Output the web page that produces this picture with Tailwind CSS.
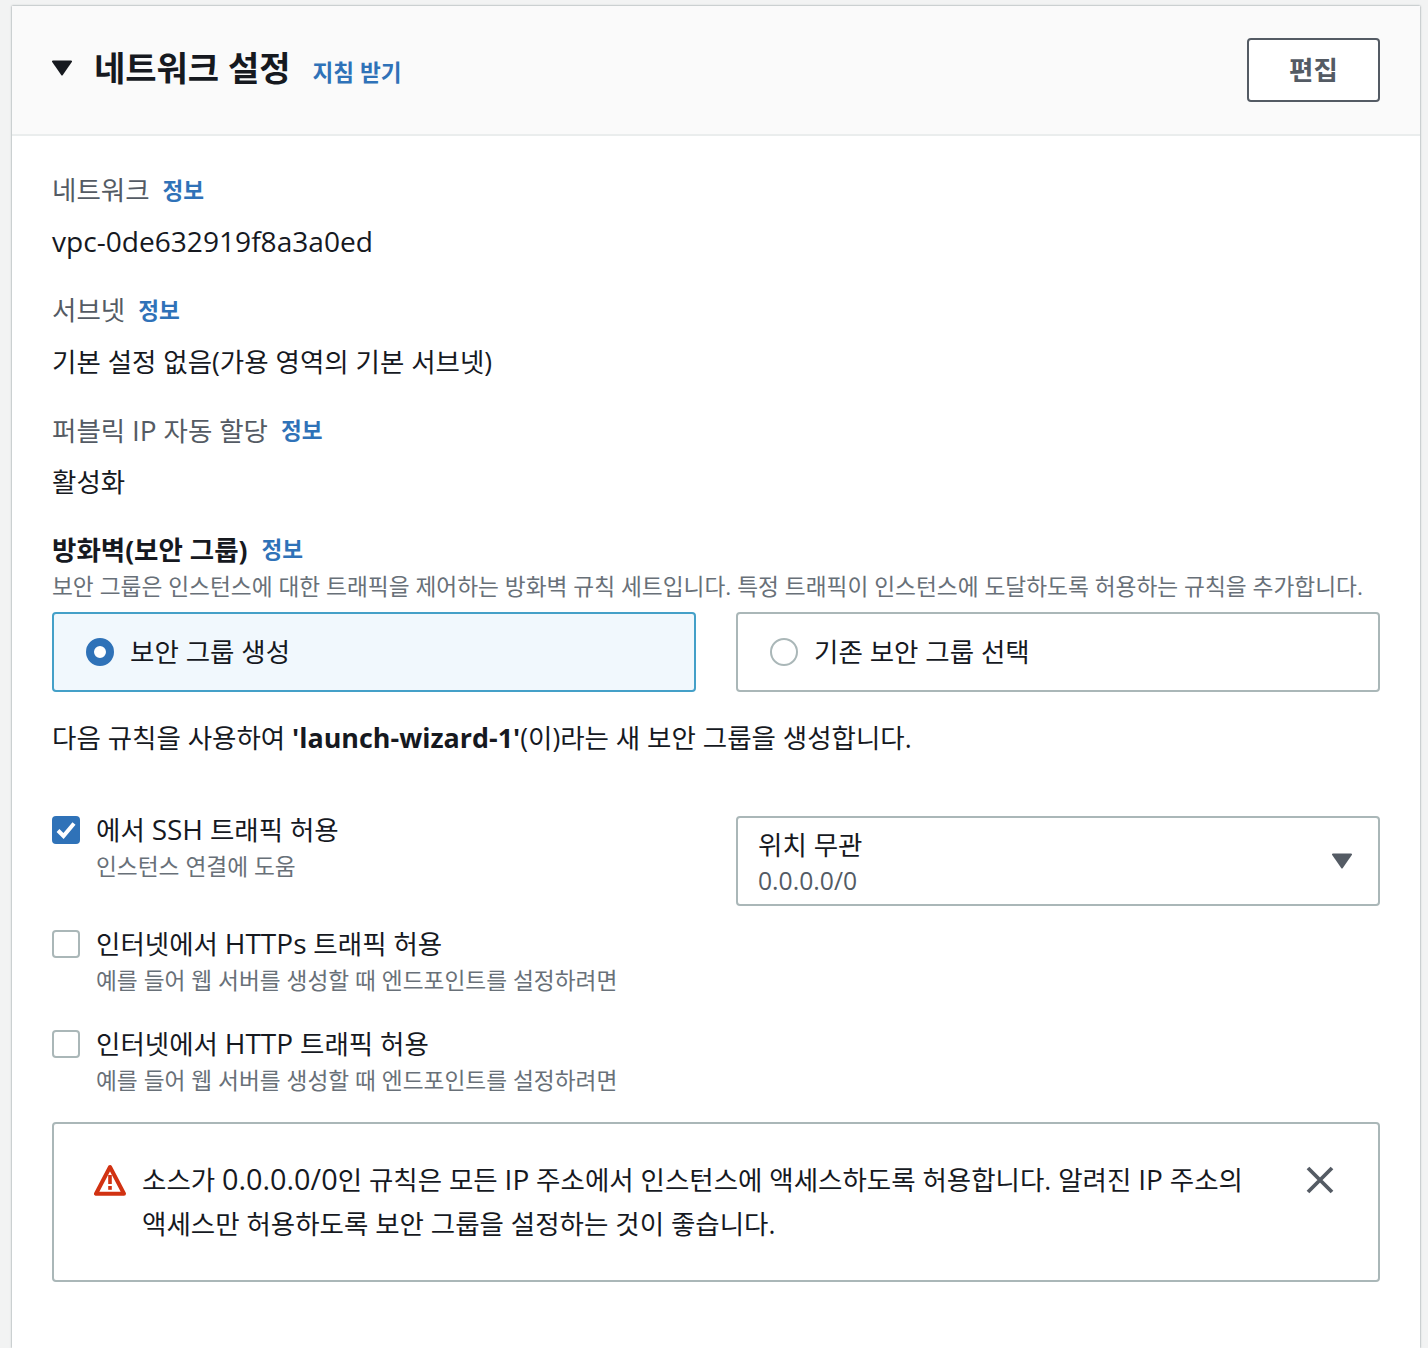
<!DOCTYPE html>
<html lang="ko">
<head>
  <meta charset="UTF-8" />
  <title>네트워크 설정</title>
  <script src="https://cdn.jsdelivr.net/npm/@tailwindcss/browser@4"></script>
</head>
<body class="bg-[#f2f3f3] h-[1348px] overflow-hidden font-['Open_Sans','Noto_Sans_CJK_KR',sans-serif] text-[#16191f]">
  <div class="ml-[12px] mr-[8px] pt-[6px] h-full">
    <div class="bg-white h-full shadow-[0_0_2px_rgba(0,28,36,0.5)]">

      <!-- header -->
      <div class="h-[130px] bg-[#fafafa] border-b-2 border-[#eaeded] px-[40px] flex items-center justify-between">
        <div class="flex items-center">
          <svg class="w-[20px] h-[16px] mr-[22px] mt-[-4px]" viewBox="0 0 20 16"><path d="M1 0.5h18a1 1 0 0 1 .8 1.5l-9 13a1 1 0 0 1-1.6 0l-9-13A1 1 0 0 1 1 .5z" fill="#16191f"/></svg>
          <h2 class="text-[34px] leading-[44px] font-bold mt-[-4px]">네트워크 설정</h2>
          <a class="ml-[22px] mt-[6px] text-[22.6px] leading-[32px] font-bold text-[#2f72b8]">지침 받기</a>
        </div>
        <button class="w-[133px] h-[64px] bg-white border-2 border-[#545b64] rounded-[4px] text-[26.5px] leading-[32px] font-bold text-[#545b64]">편집</button>
      </div>

      <!-- body -->
      <div class="px-[40px]">
        <div class="mt-[36px] h-[36px] flex items-center text-[26.5px] leading-[36px] text-[#545b64]">
          <span>네트워크</span><a class="ml-[13px] mt-[2px] text-[22.6px] font-bold text-[#2f72b8]">정보</a>
        </div>
        <div class="mt-[15px] h-[36px] flex items-center text-[28.1px] leading-[36px]">vpc-0de632919f8a3a0ed</div>

        <div class="mt-[33px] h-[36px] flex items-center text-[26.5px] leading-[36px] text-[#545b64]">
          <span>서브넷</span><a class="ml-[13px] mt-[2px] text-[22.6px] font-bold text-[#2f72b8]">정보</a>
        </div>
        <div class="mt-[16px] h-[36px] flex items-center text-[26.5px] leading-[36px]">기본 설정 없음(가용 영역의 기본 서브넷)</div>

        <div class="mt-[32px] h-[36px] flex items-center text-[26.5px] leading-[36px] text-[#545b64]">
          <span>퍼블릭 <span class="text-[28px]">IP</span> 자동 할당</span><a class="ml-[13px] mt-[2px] text-[22.6px] font-bold text-[#2f72b8]">정보</a>
        </div>
        <div class="mt-[16px] h-[36px] flex items-center text-[26.5px] leading-[36px]">활성화</div>

        <div class="mt-[32px] h-[36px] flex items-center text-[26.5px] leading-[36px]">
          <span class="font-bold">방화벽(보안 그룹)</span><a class="ml-[14px] text-[22.6px] font-bold text-[#2f72b8]">정보</a>
        </div>
        <p class="mt-[2px] h-[34px] flex items-center text-[22.7px] leading-[32px] text-[#687078] whitespace-nowrap">보안 그룹은 인스턴스에 대한 트래픽을 제어하는 방화벽 규칙 세트입니다. 특정 트래픽이 인스턴스에 도달하도록 허용하는 규칙을 추가합니다.</p>

        <!-- radio cards -->
        <div class="mt-[8px] grid grid-cols-2 gap-[40px]">
          <label class="h-[80px] flex items-center pl-[32px] bg-[#f1f8fd] border-2 border-[#44a0c8] rounded-[4px]">
            <span class="w-[28px] h-[28px] rounded-full border-[8px] border-[#2f72b8] bg-white"></span>
            <span class="ml-[16px] text-[26.5px] leading-[36px]">보안 그룹 생성</span>
          </label>
          <label class="h-[80px] flex items-center pl-[32px] bg-white border-2 border-[#aab7b8] rounded-[4px]">
            <span class="w-[28px] h-[28px] rounded-full border-2 border-[#aab7b8] bg-white"></span>
            <span class="ml-[16px] text-[26.5px] leading-[36px]">기존 보안 그룹 선택</span>
          </label>
        </div>

        <p class="mt-[28px] h-[36px] text-[26.5px] leading-[36px] whitespace-nowrap">다음 규칙을 사용하여 <b class="text-[26.9px]">'launch-wizard-1'</b>(이)라는 새 보안 그룹을 생성합니다.</p>

        <!-- rules -->
        <div class="mt-[60px] grid grid-cols-2 gap-[40px]">
          <div class="flex">
            <span class="w-[28px] h-[28px] rounded-[4px] bg-[#2f72b8] flex items-center justify-center">
              <svg class="w-[22px] h-[22px]" viewBox="0 0 22 22" fill="none"><path d="M3 11.5l5.5 5.5L19 4.5" stroke="#fff" stroke-width="4"/></svg>
            </span>
            <div class="ml-[16px] mt-[-3px]">
              <div class="text-[26.5px] leading-[32px]">에서 <span class="text-[28px]">SSH</span> 트래픽 허용</div>
              <div class="mt-[5px] text-[22.7px] leading-[32px] text-[#687078]">인스턴스 연결에 도움</div>
            </div>
          </div>
          <div class="h-[90px] border-2 border-[#aab7b8] rounded-[4px] pl-[20px] pr-[26px] flex items-center justify-between">
            <div class="mt-[4px]">
              <div class="text-[26.5px] leading-[36px]">위치 무관</div>
              <div class="text-[24.7px] leading-[36px] text-[#545b64]">0.0.0.0/0</div>
            </div>
            <svg class="w-[20px] h-[16px]" viewBox="0 0 20 16"><path d="M1 0.5h18a1 1 0 0 1 .8 1.5l-9 13a1 1 0 0 1-1.6 0l-9-13A1 1 0 0 1 1 .5z" fill="#545b64"/></svg>
          </div>
        </div>

        <div class="mt-[24px] flex">
          <span class="w-[28px] h-[28px] rounded-[4px] bg-white border-2 border-[#aab7b8]"></span>
          <div class="ml-[16px] mt-[-3px]">
            <div class="text-[26.5px] leading-[32px]">인터넷에서 <span class="text-[28px]">HTTPs</span> 트래픽 허용</div>
            <div class="mt-[5px] text-[22.7px] leading-[32px] text-[#687078]">예를 들어 웹 서버를 생성할 때 엔드포인트를 설정하려면</div>
          </div>
        </div>

        <div class="mt-[33px] flex">
          <span class="w-[28px] h-[28px] rounded-[4px] bg-white border-2 border-[#aab7b8]"></span>
          <div class="ml-[16px] mt-[-3px]">
            <div class="text-[26.5px] leading-[32px]">인터넷에서 <span class="text-[28px]">HTTP</span> 트래픽 허용</div>
            <div class="mt-[5px] text-[22.7px] leading-[32px] text-[#687078]">예를 들어 웹 서버를 생성할 때 엔드포인트를 설정하려면</div>
          </div>
        </div>

        <!-- alert -->
        <div class="mt-[25px] h-[160px] border-2 border-[#aab7b8] rounded-[4px] pl-[40px] pr-[44px] pt-[33px] flex">
          <svg class="w-[34px] h-[32px] mt-[7px] shrink-0" viewBox="0 0 34 32" fill="none">
            <path d="M16 3L2 29.8h28z" stroke="#d13212" stroke-width="4" stroke-linejoin="round"/>
            <rect x="14.2" y="11" width="3.6" height="9" fill="#d13212"/>
            <rect x="14.2" y="22" width="3.6" height="3.8" fill="#d13212"/>
          </svg>
          <p class="ml-[14px] text-[26.5px] leading-[44px] whitespace-nowrap">소스가 <span class="text-[28.8px]">0.0.0.0/0</span>인 규칙은 모든 <span class="text-[28px]">IP</span> 주소에서 인스턴스에 액세스하도록 허용합니다. 알려진 <span class="text-[28px]">IP</span> 주소의<br>액세스만 허용하도록 보안 그룹을 설정하는 것이 좋습니다.</p>
          <svg class="w-[30px] h-[30px] mt-[8px] ml-auto shrink-0 translate-x-[1px]" viewBox="0 0 30 30" fill="none"><path d="M3 3l24 24M27 3L3 27" stroke="#545b64" stroke-width="3.8"/></svg>
        </div>
      </div>
    </div>
  </div>
</body>
</html>
